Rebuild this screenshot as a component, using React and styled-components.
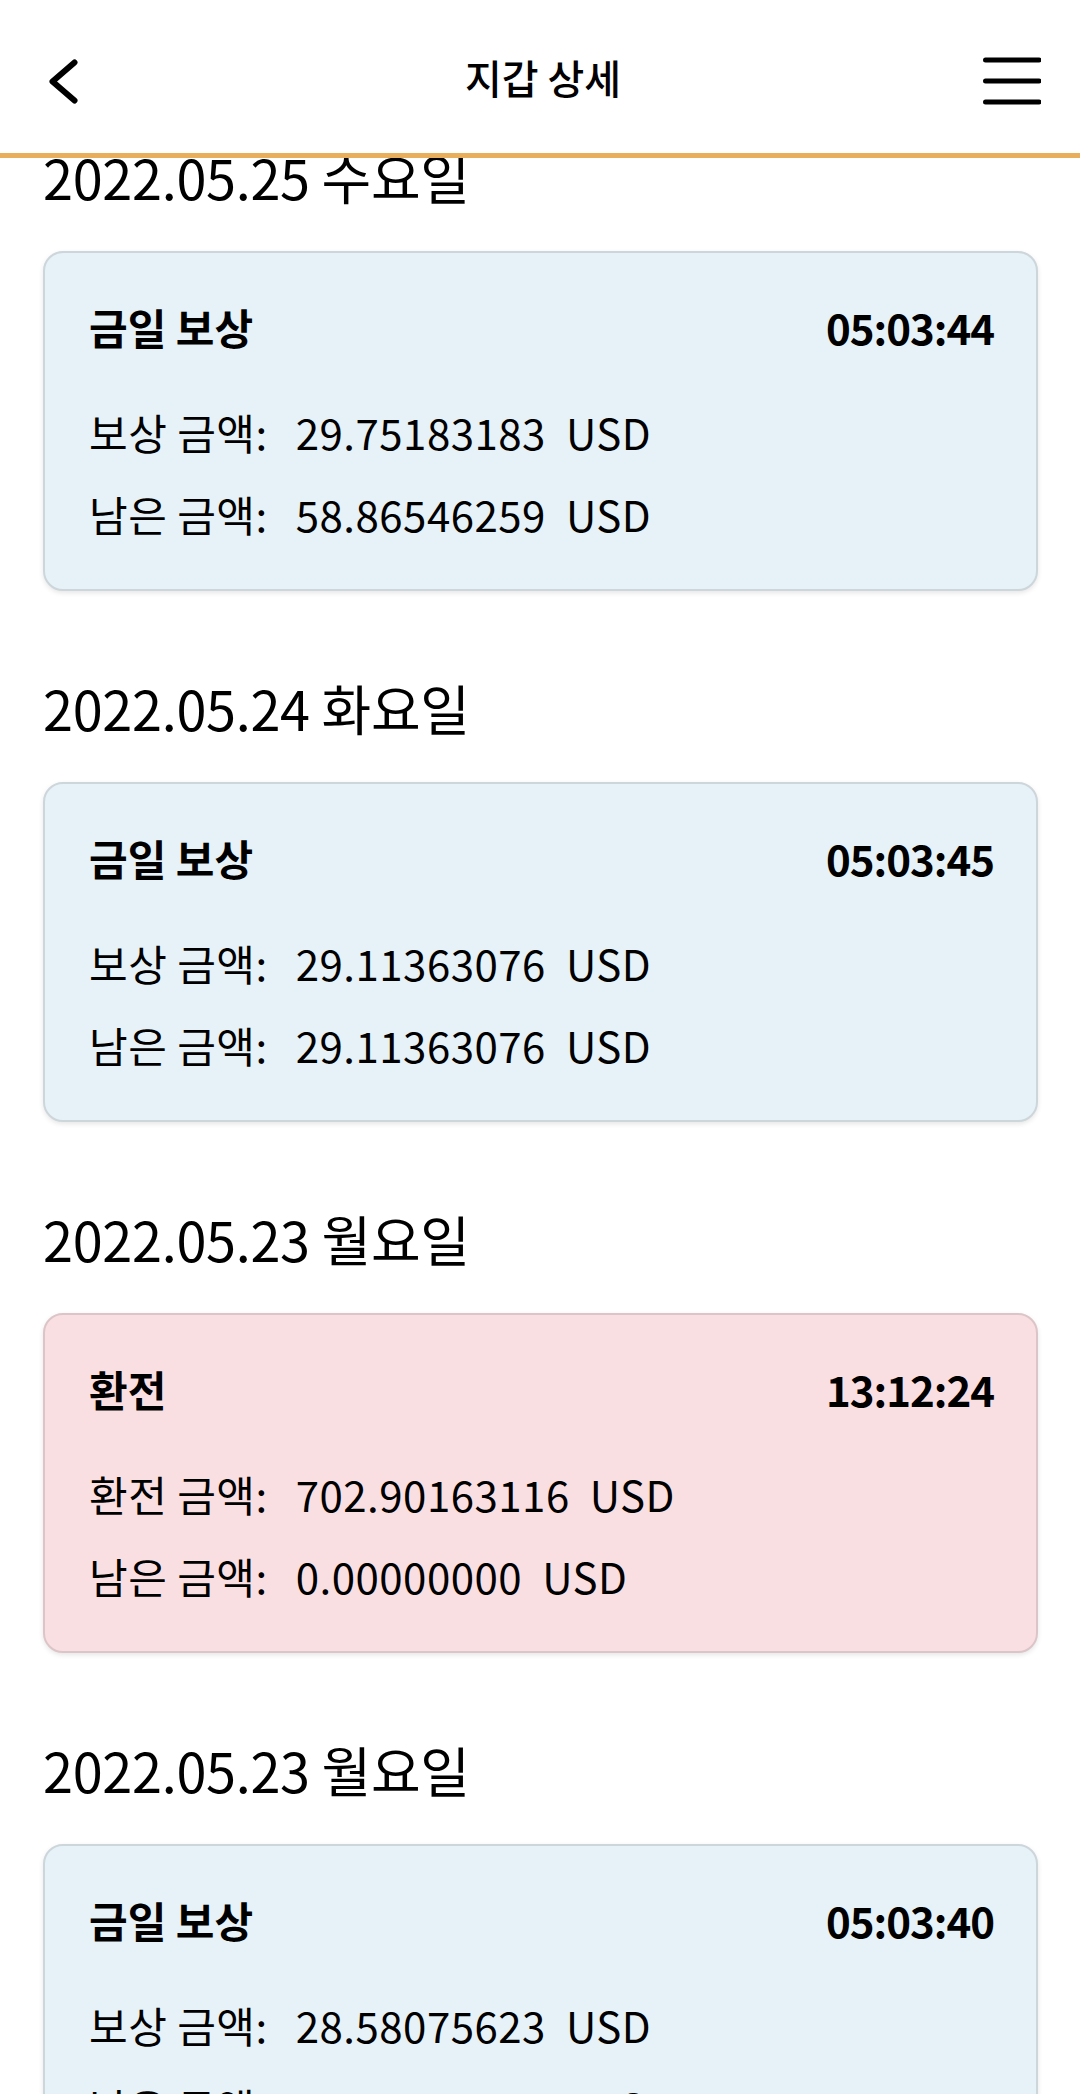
import React from 'react';
import styled, { createGlobalStyle } from 'styled-components';

const GlobalStyle = createGlobalStyle`
  html, body {
    margin: 0;
    padding: 0;
    background: #fff;
  }
  body {
    font-family: "Noto Sans CJK KR", "Noto Sans", sans-serif;
    color: #000;
  }
`;

const history = [
  {
    date: '2022.05.25 수요일',
    type: 'reward',
    title: '금일 보상',
    time: '05:03:44',
    label: '보상 금액:',
    amount: '29.75183183',
    balance: '58.86546259',
  },
  {
    date: '2022.05.24 화요일',
    type: 'reward',
    title: '금일 보상',
    time: '05:03:45',
    label: '보상 금액:',
    amount: '29.11363076',
    balance: '29.11363076',
  },
  {
    date: '2022.05.23 월요일',
    type: 'exchange',
    title: '환전',
    time: '13:12:24',
    label: '환전 금액:',
    amount: '702.90163116',
    balance: '0.00000000',
  },
  {
    date: '2022.05.23 월요일',
    type: 'reward',
    title: '금일 보상',
    time: '05:03:40',
    label: '보상 금액:',
    amount: '28.58075623',
    balance: '702.90163116',
  },
];

const App = () => {
  return (
    <>
      <GlobalStyle />
      <Screen>
        <Header>
          <IconButton aria-label="back">
            <svg width="30" height="46" viewBox="0 0 30 46">
              <path d="M26.5 4.5 L4.5 23.5 L26.5 42.5" fill="none" stroke="#000" strokeWidth="6" strokeLinecap="round" strokeLinejoin="round" />
            </svg>
          </IconButton>
          <Title>지갑 상세</Title>
          <MenuButton aria-label="menu">
            <svg width="60" height="52" viewBox="0 0 60 52">
              <g stroke="#000" strokeWidth="5" strokeLinecap="round">
                <line x1="4.5" y1="5" x2="58" y2="5" />
                <line x1="4.5" y1="26" x2="58" y2="26" />
                <line x1="4.5" y1="47" x2="58" y2="47" />
              </g>
            </svg>
          </MenuButton>
        </Header>

        <List>
          {history.map((item, i) => (
            <Group key={i}>
              <DateHeading>{item.date}</DateHeading>
              <Card $variant={item.type}>
                <CardHead>
                  <CardTitle>{item.title}</CardTitle>
                  <CardTime>{item.time}</CardTime>
                </CardHead>
                <Row>
                  <Label>{item.label}</Label>
                  <Value>{item.amount}</Value>
                  <Unit>USD</Unit>
                </Row>
                <Row>
                  <Label>남은 금액:</Label>
                  <Value>{item.balance}</Value>
                  <Unit>USD</Unit>
                </Row>
              </Card>
            </Group>
          ))}
        </List>
      </Screen>
    </>
  );
};

export default App;

const Screen = styled.div`
  position: relative;
  height: 100vh;
  overflow: hidden;
  background: #fff;
`;

const Header = styled.header`
  position: fixed;
  top: 0;
  left: 0;
  right: 0;
  z-index: 10;
  box-sizing: border-box;
  height: 158px;
  padding: 8px 42px 0 48px;
  display: grid;
  grid-template-columns: 1fr auto 1fr;
  align-items: center;
  background: #fff;
  border-bottom: 5px solid #e9ae5b;
`;

const IconButton = styled.button`
  justify-self: start;
  display: flex;
  padding: 0;
  border: 0;
  background: none;
`;

const MenuButton = styled(IconButton)`
  justify-self: end;
  margin-right: -3px;
`;

const Title = styled.h1`
  margin: 0 0 8px;
  font-size: 40px;
  font-weight: 500;
  line-height: 1;
`;

const List = styled.main`
  padding: 137px 42px 0 43px;
`;

const Group = styled.section`
  margin-bottom: 77px;
`;

const DateHeading = styled.h2`
  margin: 0 0 34px;
  font-size: 54px;
  font-weight: 400;
  line-height: 80px;
  letter-spacing: -0.3px;
`;

const Card = styled.div`
  box-sizing: border-box;
  height: 340px;
  padding: 43px 42px 0 41px;
  border-radius: 20px;
  border: 2px solid ${p => (p.$variant === 'exchange' ? '#dcc5c8' : '#cdd6da')};
  background: ${p => (p.$variant === 'exchange' ? '#fadfe2' : '#e6f2f7')};
  box-shadow: 0 2px 5px rgba(0, 0, 0, 0.1);
`;

const CardHead = styled.div`
  display: flex;
  justify-content: space-between;
  align-items: center;
  height: 60px;
  margin-bottom: 45px;
`;

const CardTitle = styled.span`
  font-size: 42px;
  font-weight: 700;
  padding-left: 3px;
`;

const CardTime = styled.span`
  font-size: 42px;
  font-weight: 700;
  letter-spacing: -1px;
`;

const Row = styled.div`
  display: flex;
  align-items: center;
  height: 60px;
  padding-left: 3px;
  font-size: 42px;
  letter-spacing: 0.5px;
  & + & {
    margin-top: 22px;
  }
`;

const Label = styled.span`
  margin-right: 28px;
`;

const Value = styled.span``;

const Unit = styled.span`
  margin-left: 20px;
`;
